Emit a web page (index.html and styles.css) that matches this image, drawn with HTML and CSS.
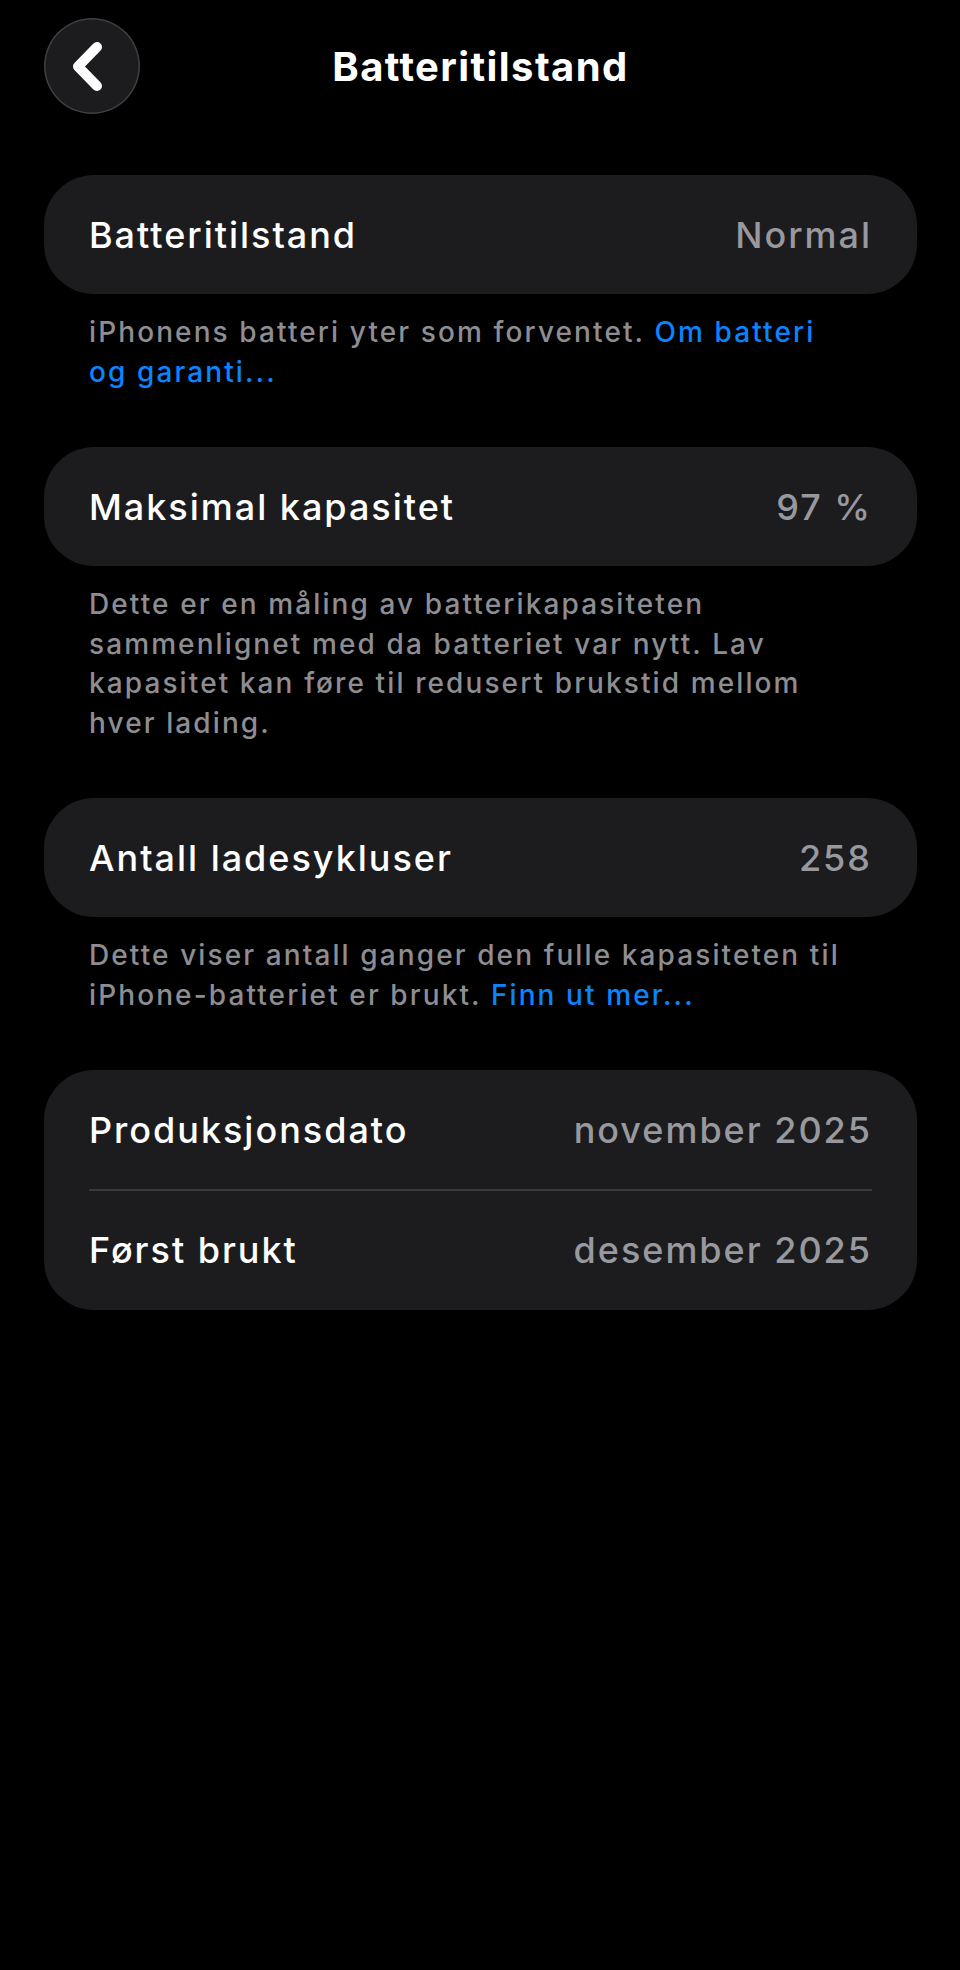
FILE: index.html
```html
<!DOCTYPE html>
<html lang="nb">
<head>
    <meta charset="UTF-8">
    <meta name="viewport" content="width=device-width, initial-scale=1.0">
    <title>Batteritilstand</title>
    <link rel="stylesheet" href="styles.css">
</head>
<body>
    <div class="page">
        <div class="header">
            <a href="#" class="back-btn" aria-label="Tilbake">
                <svg width="96" height="96" viewBox="0 0 96 96">
                    <path d="M53 29 L34 48.5 L53 68" fill="none" stroke="#fff" stroke-width="10" stroke-linecap="round" stroke-linejoin="round"/>
                </svg>
            </a>
            <h1>Batteritilstand</h1>
            <div></div>
        </div>

        <div class="card">
            <div class="row">
                <span class="label">Batteritilstand</span>
                <span class="value">Normal</span>
            </div>
        </div>
        <p class="footnote">iPhonens batteri yter som forventet. <a href="#">Om batteri og garanti...</a></p>

        <div class="card">
            <div class="row">
                <span class="label">Maksimal kapasitet</span>
                <span class="value">97 %</span>
            </div>
        </div>
        <p class="footnote">Dette er en måling av batterikapasiteten sammenlignet med da batteriet var nytt. Lav kapasitet kan føre til redusert brukstid mellom hver lading.</p>

        <div class="card">
            <div class="row">
                <span class="label">Antall ladesykluser</span>
                <span class="value">258</span>
            </div>
        </div>
        <p class="footnote">Dette viser antall ganger den fulle kapasiteten til iPhone-batteriet er brukt. <a href="#">Finn ut mer...</a></p>

        <div class="card">
            <div class="row">
                <span class="label">Produksjonsdato</span>
                <span class="value">november 2025</span>
            </div>
            <div class="sep"></div>
            <div class="row">
                <span class="label">Først brukt</span>
                <span class="value">desember 2025</span>
            </div>
        </div>
    </div>
</body>
</html>
```

FILE: styles.css
```css
body {
    margin: 0;
    background-color: #000;
    color: #fff;
    font-family: Inter, "Noto Sans", sans-serif;
    min-height: 1970px;
}
.page {
    padding: 18px 43px 0 44px;
}
.header {
    display: grid;
    grid-template-columns: 96px 1fr 96px;
    align-items: center;
    height: 96px;
    margin-bottom: 61px;
}
.back-btn {
    display: block;
    width: 96px;
    height: 96px;
    border-radius: 50%;
    background-color: #1c1c1e;
    box-shadow: inset 0 0 0 1.5px rgba(255,255,255,0.16);
}
.back-btn svg {
    display: block;
}
h1 {
    margin: 0;
    text-align: center;
    font-size: 40px;
    font-weight: 700;
    letter-spacing: 0.035em;
}
.card {
    background-color: #1c1c1e;
    border-radius: 50px;
}
.row {
    display: flex;
    justify-content: space-between;
    align-items: center;
    height: 119px;
    padding: 0 45px;
    font-size: 36px;
    font-weight: 500;
    letter-spacing: 0.055em;
}
.value {
    color: #98989f;
}
.sep {
    height: 1.5px;
    margin: 0 45px;
    background-color: #3a3a3c;
}
.footnote {
    margin: 19px 64px 55px 45px;
    font-size: 28px;
    font-weight: 500;
    line-height: 39.5px;
    letter-spacing: 0.075em;
    color: #8d8d93;
}
.footnote a {
    color: #0a84ff;
    text-decoration: none;
}
```
